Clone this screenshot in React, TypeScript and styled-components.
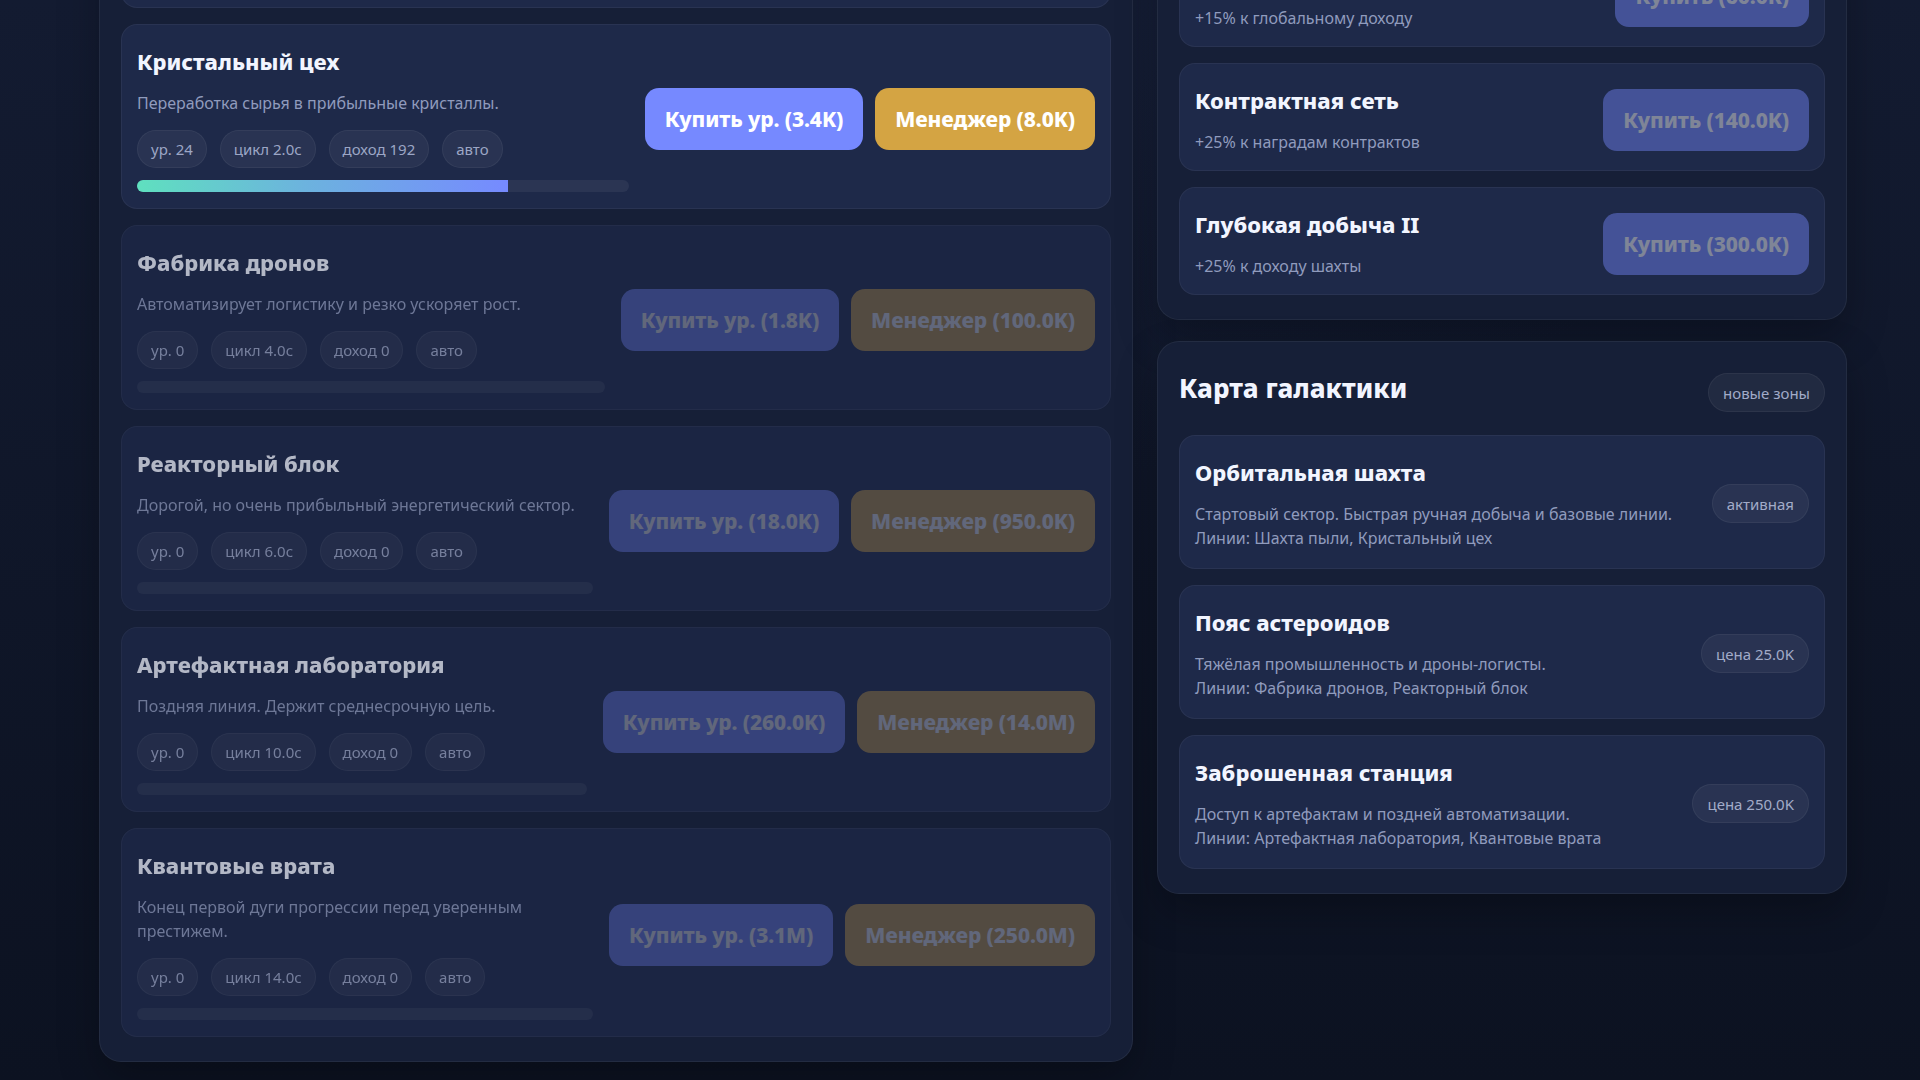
import React, { useLayoutEffect } from "react";
import styled, { createGlobalStyle } from "styled-components";

const GlobalStyle = createGlobalStyle`
  html { scrollbar-width: none; }
  html::-webkit-scrollbar, body::-webkit-scrollbar { display: none; width: 0; height: 0; }
  html, body { margin: 0; padding: 0; }
  * { box-sizing: border-box; }
  body {
    background-color: #0e1527;
    background-image:
      radial-gradient(1200px 700px at 50% 0%, rgba(40, 56, 100, 0.18), rgba(0, 0, 0, 0) 70%),
      linear-gradient(180deg, #131b31 0%, #0c1221 100%);
    background-attachment: fixed;
    font-family: "Noto Sans", "Open Sans", "Liberation Sans", sans-serif;
    color: #eef2ff;
  }
`;

const Page = styled.main`
  width: 1920px;
  display: grid;
  grid-template-columns: 1034px 690px;
  column-gap: 24px;
  align-items: start;
  padding: 24px 73px 40px 99px;
`;

const Panel = styled.section`
  background: #161f37;
  border: 1px solid rgba(255, 255, 255, 0.06);
  border-radius: 22px;
  padding: 21px 21px 24px;
  box-shadow: 0 18px 40px rgba(0, 0, 0, 0.25);
`;

const RightColumn = styled.div`
  display: flex;
  flex-direction: column;
  gap: 21px;
`;

const PanelHeader = styled.header<{ $mb?: number }>`
  display: flex;
  justify-content: space-between;
  align-items: flex-start;
  height: 49px;
  margin-bottom: ${(p) => p.$mb ?? 23}px;
`;

const PanelTitle = styled.h2`
  margin: 6px 0 0;
  font-size: 26px;
  line-height: 38px;
  font-weight: 800;
  color: #f2f5ff;
`;

const Pill = styled.span`
  display: inline-flex;
  align-items: center;
  height: 39px;
  padding: 0 14px;
  border-radius: 999px;
  font-size: 15px;
  color: #a2abc8;
  background: rgba(255, 255, 255, 0.05);
  border: 1px solid rgba(255, 255, 255, 0.05);
  white-space: nowrap;
  flex-shrink: 0;
`;

const HeaderPill = styled(Pill)`
  margin-top: 10px;
`;

const List = styled.div`
  display: flex;
  flex-direction: column;
  gap: 16px;
`;

const Card = styled.article<{ $locked?: boolean }>`
  display: flex;
  align-items: center;
  gap: 16px;
  padding: 21px 15px 16px;
  background: #1e2949;
  border: 1px solid rgba(255, 255, 255, 0.05);
  border-radius: 16px;
  opacity: ${(p) => (p.$locked ? 0.72 : 1)};
`;

const ZoneCard = styled(Card)`
  padding-bottom: 18px;
`;

const Info = styled.div`
  flex: 1;
  min-width: 0;
  display: flex;
  flex-direction: column;
`;

const CardTitle = styled.h3`
  margin: 0;
  font-size: 22px;
  line-height: 30px;
  font-weight: 800;
  color: #f2f5ff;
`;

const CardText = styled.p`
  margin: 15px 0 0;
  font-size: 16px;
  line-height: 24px;
  color: #909bbd;
`;

const Chips = styled.div`
  display: flex;
  flex-wrap: wrap;
  gap: 13px;
  margin-top: 15px;
`;

const Chip = styled.span`
  display: inline-flex;
  align-items: center;
  height: 38px;
  padding: 0 13px;
  border-radius: 999px;
  font-size: 15px;
  color: #9ca6c5;
  background: rgba(255, 255, 255, 0.05);
  border: 1px solid rgba(255, 255, 255, 0.05);
  white-space: nowrap;
`;

const Track = styled.div`
  margin-top: 12px;
  height: 12px;
  border-radius: 999px;
  background: rgba(255, 255, 255, 0.06);
  overflow: hidden;
`;

const Fill = styled.div`
  height: 100%;
  background: linear-gradient(90deg, #5fe0bf 0%, #6cb3de 45%, #768aff 100%);
`;

const Actions = styled.div`
  display: flex;
  gap: 12px;
  flex-shrink: 0;
`;

const ActionButton = styled.button<{ $variant: "buy" | "manager"; $off?: boolean }>`
  border: 0;
  border-radius: 14px;
  padding: 17px 20px;
  font-family: "Noto Sans", "Open Sans", "Liberation Sans", sans-serif;
  font-size: 21px;
  line-height: 28px;
  font-weight: 800;
  letter-spacing: -0.1px;
  color: #ffffff;
  background: ${(p) => (p.$variant === "buy" ? "#7689ff" : "#d4a443")};
  opacity: ${(p) => (p.$off ? 0.43 : 1)};
  white-space: nowrap;
  flex-shrink: 0;
  cursor: pointer;
`;

type Line = {
  title: string;
  text: string;
  level: number;
  cycle: string;
  income: number;
  progress: number;
  buy: string;
  manager: string;
  locked: boolean;
};

const lines: Line[] = [
  { title: "Шахта пыли", text: "Ручная добыча звёздной пыли на орбите.", level: 48, cycle: "1.0с", income: 96, progress: 40, buy: "Купить ур. (1.2K)", manager: "Менеджер (1.0K)", locked: false },
  { title: "Кристальный цех", text: "Переработка сырья в прибыльные кристаллы.", level: 24, cycle: "2.0с", income: 192, progress: 75.5, buy: "Купить ур. (3.4K)", manager: "Менеджер (8.0K)", locked: false },
  { title: "Фабрика дронов", text: "Автоматизирует логистику и резко ускоряет рост.", level: 0, cycle: "4.0с", income: 0, progress: 0, buy: "Купить ур. (1.8K)", manager: "Менеджер (100.0K)", locked: true },
  { title: "Реакторный блок", text: "Дорогой, но очень прибыльный энергетический сектор.", level: 0, cycle: "6.0с", income: 0, progress: 0, buy: "Купить ур. (18.0K)", manager: "Менеджер (950.0K)", locked: true },
  { title: "Артефактная лаборатория", text: "Поздняя линия. Держит среднесрочную цель.", level: 0, cycle: "10.0с", income: 0, progress: 0, buy: "Купить ур. (260.0K)", manager: "Менеджер (14.0M)", locked: true },
  { title: "Квантовые врата", text: "Конец первой дуги прогрессии перед уверенным престижем.", level: 0, cycle: "14.0с", income: 0, progress: 0, buy: "Купить ур. (3.1M)", manager: "Менеджер (250.0M)", locked: true },
];

const upgrades = [
  { title: "Усиленные буры", text: "+50% к ручной добыче", price: "Купить (5.0K)" },
  { title: "Галактический рынок", text: "+15% к глобальному доходу", price: "Купить (60.0K)" },
  { title: "Контрактная сеть", text: "+25% к наградам контрактов", price: "Купить (140.0K)" },
  { title: "Глубокая добыча II", text: "+25% к доходу шахты", price: "Купить (300.0K)" },
];

const zones = [
  { title: "Орбитальная шахта", text: "Стартовый сектор. Быстрая ручная добыча и базовые линии.", lines: "Линии: Шахта пыли, Кристальный цех", status: "активная" },
  { title: "Пояс астероидов", text: "Тяжёлая промышленность и дроны-логисты.", lines: "Линии: Фабрика дронов, Реакторный блок", status: "цена 25.0K" },
  { title: "Заброшенная станция", text: "Доступ к артефактам и поздней автоматизации.", lines: "Линии: Артефактная лаборатория, Квантовые врата", status: "цена 250.0K" },
];

export default function App() {
  useLayoutEffect(() => {
    window.scrollTo(0, 295);
  }, []);

  return (
    <>
      <GlobalStyle />
      <Page>
        <Panel>
          <PanelHeader>
            <PanelTitle>Производство</PanelTitle>
            <HeaderPill>6 линий</HeaderPill>
          </PanelHeader>
          <List>
            {lines.map((l) => (
              <Card key={l.title} $locked={l.locked}>
                <Info>
                  <CardTitle>{l.title}</CardTitle>
                  <CardText>{l.text}</CardText>
                  <Chips>
                    <Chip>ур. {l.level}</Chip>
                    <Chip>цикл {l.cycle}</Chip>
                    <Chip>доход {l.income}</Chip>
                    <Chip>авто</Chip>
                  </Chips>
                  <Track>
                    <Fill style={{ width: `${l.progress}%` }} />
                  </Track>
                </Info>
                <Actions>
                  <ActionButton $variant="buy" $off={l.locked}>{l.buy}</ActionButton>
                  <ActionButton $variant="manager" $off={l.locked}>{l.manager}</ActionButton>
                </Actions>
              </Card>
            ))}
          </List>
        </Panel>

        <RightColumn>
          <Panel>
            <PanelHeader $mb={15}>
              <PanelTitle>Улучшения</PanelTitle>
              <HeaderPill>бонусы</HeaderPill>
            </PanelHeader>
            <List>
              {upgrades.map((u) => (
                <Card key={u.title}>
                  <Info>
                    <CardTitle>{u.title}</CardTitle>
                    <CardText>{u.text}</CardText>
                  </Info>
                  <ActionButton $variant="buy" $off>{u.price}</ActionButton>
                </Card>
              ))}
            </List>
          </Panel>

          <Panel>
            <PanelHeader>
              <PanelTitle>Карта галактики</PanelTitle>
              <HeaderPill>новые зоны</HeaderPill>
            </PanelHeader>
            <List>
              {zones.map((z) => (
                <ZoneCard key={z.title}>
                  <Info>
                    <CardTitle>{z.title}</CardTitle>
                    <CardText>
                      {z.text}
                      <br />
                      {z.lines}
                    </CardText>
                  </Info>
                  <Pill>{z.status}</Pill>
                </ZoneCard>
              ))}
            </List>
          </Panel>
        </RightColumn>
      </Page>
    </>
  );
}
